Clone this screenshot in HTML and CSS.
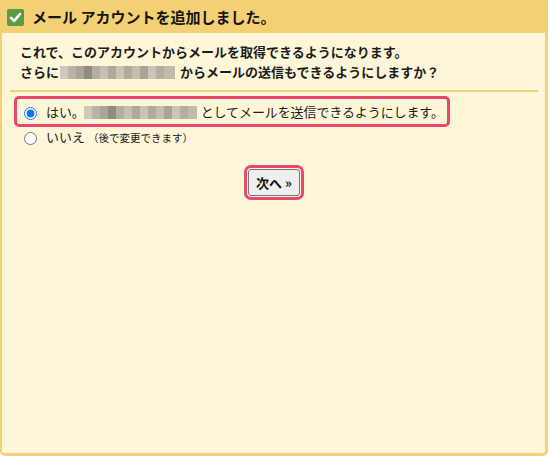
FILE: index.html
```html
<!DOCTYPE html>
<html lang="ja">
  <head>
    <meta charset="UTF-8" />
    <title>メール アカウントを追加しました</title>
    <link rel="stylesheet" href="styles.css">
  </head>
  <body>
    <div class="panel">
      <div class="panel-head">
        <span class="check">
          <svg width="17" height="17" viewBox="0 0 17 17">
            <rect x="0" y="0" width="17" height="17" rx="2" fill="#5b9b45" />
            <path d="M4 8.8 L7.2 11.8 L13 5" fill="none" stroke="#fff" stroke-width="2.6" stroke-linecap="round" stroke-linejoin="round" />
          </svg>
        </span>
        <h1>メール アカウントを追加しました。</h1>
      </div>

      <div class="panel-body">
        <p class="intro">
          これで、このアカウントからメールを取得できるようになります。<br>
          さらに<span class="blur"></span>からメールの送信もできるようにしますか？
        </p>
        <div class="divider"></div>

        <form id="send-form">
          <label class="option selected">
            <input type="radio" name="send" checked />
            <span>はい。<span class="blur wide"></span>としてメールを送信できるようにします。</span>
          </label>
          <label class="option">
            <input type="radio" name="send" />
            <span>いいえ <small>（後で変更できます）</small></span>
          </label>
          <div class="actions">
            <button type="submit" class="next-btn">次へ »</button>
          </div>
        </form>
      </div>
    </div>
  </body>
</html>
```

FILE: styles.css
```css
body {
  margin: 0;
  background: #ffffff;
  color: #1c1c1c;
  font-family: "Noto Sans CJK JP", "Noto Sans", sans-serif;
  font-size: 13px;
}
.panel {
  width: 548px;
  height: 456px;
  box-sizing: border-box;
  border: 2px solid #f3d074;
  border-top: none;
  border-right-width: 3px;
  border-bottom-width: 3px;
  border-radius: 0 0 5px 5px;
  background: #fef6d9;
  display: flex;
  flex-direction: column;
}
.panel-head {
  height: 33px;
  background: #f3d074;
  display: flex;
  align-items: center;
  margin-left: -2px;
  margin-right: -3px;
  padding-left: 7px;
}
.check {
  display: flex;
  width: 17px;
  height: 17px;
  margin-top: 1px;
}
.panel-head h1 {
  margin: 0 0 0 8px;
  font-size: 15px;
  font-weight: bold;
  line-height: 20px;
  color: #151515;
}
.panel-body {
  padding: 9px 7px 0 8px;
}
.intro {
  margin: 0;
  padding-left: 10px;
  font-weight: bold;
  line-height: 20px;
}
.blur {
  display: inline-block;
  width: 115px;
  height: 13px;
  margin: 0 5px 0 1px;
  vertical-align: -2px;
  background: linear-gradient(90deg,
    #cfcab8 0, #cfcab8 8px,
    #b9b5a5 8px, #b9b5a5 16px,
    #a9a597 16px, #a9a597 24px,
    #8f8c80 24px, #8f8c80 32px,
    #b3af9f 32px, #b3af9f 40px,
    #c6c2b1 40px, #c6c2b1 48px,
    #aeaa9b 48px, #aeaa9b 56px,
    #c9c5b4 56px, #c9c5b4 64px,
    #b0ac9d 64px, #b0ac9d 72px,
    #c3bfae 72px, #c3bfae 80px,
    #a9a596 80px, #a9a596 88px,
    #cac6b5 88px, #cac6b5 96px,
    #b4b0a1 96px, #b4b0a1 104px,
    #c0bcab 104px);
}
.blur.wide {
  width: 113px;
  margin: 0 4px 0 -1px;
}
.divider {
  height: 2px;
  background: #f3d074;
  margin-top: 8px;
}
.option {
  display: flex;
  align-items: center;
  width: fit-content;
  margin-left: 7px;
  padding-left: 7px;
  line-height: 20px;
}
.option input {
  width: 13px;
  height: 13px;
  margin: 2px 9px 0 0;
  accent-color: #1a73e8;
}
.option.selected {
  margin-top: 7px;
  padding: 3px 3px 2px 7px;
  outline: 3px solid #e8476e;
  border-radius: 2px;
  letter-spacing: -0.1px;
}
.option.selected + .option {
  margin-top: 3px;
}
.option small {
  font-size: 10.5px;
}
.actions {
  display: flex;
  justify-content: center;
  margin-top: 21px;
}
.next-btn {
  height: 27px;
  padding: 0 7px;
  border: 1px solid #767676;
  border-radius: 3px;
  background: #efefef;
  color: #111;
  font-family: "Noto Sans CJK JP", "Noto Sans", sans-serif;
  font-size: 13px;
  font-weight: bold;
  outline: 3px solid #e8476e;
  outline-offset: 1px;
}
```
